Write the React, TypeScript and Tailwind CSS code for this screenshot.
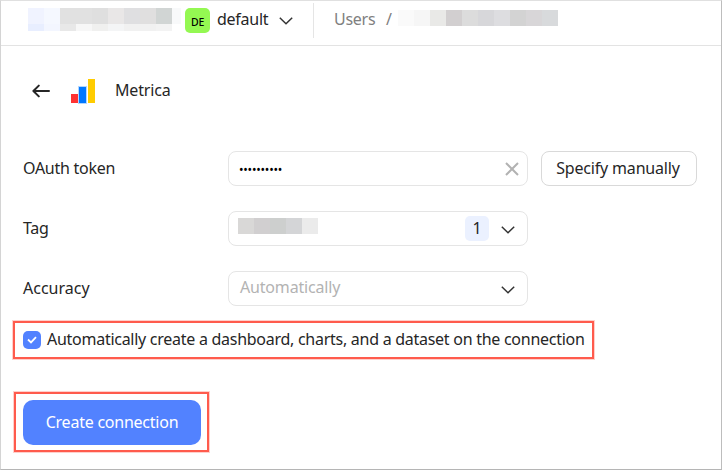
import type { ReactNode } from "react";

function Chevron() {
  return (
    <svg width="14" height="8" viewBox="0 0 14 8" fill="none" className="shrink-0">
      <path d="M0.8 0.8L7 6.8L13.2 0.8" stroke="#333" strokeWidth="1.5" />
    </svg>
  );
}

function Row({ label, children }: { label: ReactNode; children: ReactNode }) {
  return (
    <div className="flex h-[35px] items-center">
      <div className="mb-[2px] w-[205px] shrink-0">{label}</div>
      {children}
    </div>
  );
}

function Field({ children }: { children: ReactNode }) {
  return (
    <div className="flex h-[35px] w-[300px] items-center rounded-lg border border-[#e5e5e5]">
      {children}
    </div>
  );
}

export default function App() {
  return (
    <div className="h-[470px] w-[722px] overflow-hidden whitespace-nowrap border border-t-[#e0e0e0] border-r-[#bdbdbd] border-b-[#b5b5b5] border-l-[#d4d4d4] bg-white font-['Noto_Sans',sans-serif] text-base leading-6 tracking-[-0.27px] text-[#262626]">
      <header className="flex h-[45px] items-start border-b border-[#e3e3e3]">
        <div className="mt-[7px] ml-[27px] w-[153px] shrink-0">
          <div className="flex h-4">
            <i className="w-4 bg-[#f0f3ff]" />
            <i className="w-4 bg-[#f5f8ff]" />
            <i className="w-8 bg-[#e1e1e1]" />
            <i className="w-4 bg-[#dfdfdf]" />
            <i className="w-4 bg-[#e9e7e7]" />
            <i className="w-4 bg-[#dfdfe1]" />
            <i className="w-4 bg-[#e0dfdf]" />
            <i className="w-4 bg-[#d1d5d4]" />
            <i className="w-[9px] bg-[#f8f9fa]" />
          </div>
          <div className="flex h-[7px]">
            <i className="w-4 bg-[#e8eeff]" />
            <i className="w-4 bg-[#f3f6ff]" />
            <i className="w-4 bg-[#e8e8e8]" />
            <i className="w-4 bg-[#f7f7f7]" />
            <i className="w-4 bg-[#f0f0ef]" />
            <i className="w-4 bg-[#f4f5f6]" />
            <i className="w-8 bg-[#f1f1f1]" />
            <i className="w-4 bg-[#f3f3f3]" />
          </div>
        </div>
        <div className="mt-[7px] ml-[4px] flex h-[25px] w-[25px] items-center justify-center rounded-[5px] bg-[#94f852] pt-[2px] font-['Noto_Sans',sans-serif] text-[10.5px] font-medium tracking-[-0.2px] text-black">
          DE
        </div>
        <span className="mt-[6px] ml-[7px] w-[62px]">default</span>
        <div className="mt-4">
          <Chevron />
        </div>
        <div className="mt-[2px] ml-5 h-[35px] w-px bg-[#e5e5e5]" />
        <span className="mt-[6px] ml-5 w-[52px] text-[#808080]">Users</span>
        <span className="mt-[6px] w-[12px] text-[#808080]">/</span>
        <div className="mt-[9px] flex h-4">
          <i className="w-4 bg-[#fafafa]" />
          <i className="w-4 bg-[#f6f6f6]" />
          <i className="w-4 bg-[#e9e9e7]" />
          <i className="w-4 bg-[#d2cfd0]" />
          <i className="w-4 bg-[#dcdcdc]" />
          <i className="w-4 bg-[#d7d7da]" />
          <i className="w-4 bg-[#dddde0]" />
          <i className="w-4 bg-[#d3d3d3]" />
          <i className="w-4 bg-[#d8d6d8]" />
          <i className="w-4 bg-[#d8dadc]" />
        </div>
      </header>

      <main className="pl-[22px]">
        <div className="flex h-[105px] items-start pt-[32px]">
          <svg width="18" height="14" viewBox="0 0 18 14" fill="none" className="mt-[6px] ml-[9px]">
            <path
              d="M17 7H1.5M6.8 1.6L1.4 7L6.8 12.4"
              stroke="#262626"
              strokeWidth="2"
              strokeLinecap="round"
              strokeLinejoin="round"
            />
          </svg>
          <div className="ml-[21px] flex h-[25px] items-end gap-px">
            <i className="h-[9px] w-[7px] bg-[#ff3333]" />
            <i className="h-[16px] w-[7px] bg-[#0077ff] ring-1 ring-[#0077ff]/30" />
            <i className="ml-px h-[24px] w-[7px] bg-[#ffcc00]" />
          </div>
          <span className="ml-5 tracking-[-0.15px]">Metrica</span>
        </div>

        <div className="flex flex-col gap-[25px]">
          <Row label="OAuth token">
            <Field>
              <span className="mt-[2px] ml-[10px] text-[12px] tracking-[-0.2px] text-black">••••••••••</span>
              <svg width="14" height="14" viewBox="0 0 14 14" fill="none" className="mr-[8px] ml-auto">
                <path d="M1 1L13 13M13 1L1 13" stroke="#b2b2b2" strokeWidth="2" />
              </svg>
            </Field>
            <button className="ml-[13px] h-[35px] w-[156px] rounded-lg border border-[#d9d9d9] pr-[2px] pb-[2px] pl-0 tracking-[-0.18px]">
              <span>Specify manually</span>
            </button>
          </Row>
          <Row label="Tag">
            <Field>
              <div className="mb-[6px] ml-[9px] flex h-4">
                <i className="w-4 bg-[#d9d8d7]" />
                <i className="w-4 bg-[#d1cfd0]" />
                <i className="w-4 bg-[#cdcfce]" />
                <i className="w-4 bg-[#d4d5d7]" />
                <i className="w-4 bg-[#ebebeb]" />
              </div>
              <div className="mr-[12px] ml-auto flex h-[25px] w-6 items-center justify-center rounded-[5px] bg-[#ebf1ff] pb-[2px]">
                1
              </div>
              <div className="mt-[2px] mr-[12px]">
                <Chevron />
              </div>
            </Field>
          </Row>
          <Row label={<span className="tracking-normal">Accuracy</span>}>
            <Field>
              <span className="mb-[3px] ml-[11px] tracking-[-0.18px] text-[#b3b3b3]">Automatically</span>
              <div className="mt-[2px] mr-[12px] ml-auto">
                <Chevron />
              </div>
            </Field>
          </Row>
        </div>

        <div className="mt-[15px] -ml-[10px] flex h-[38px] w-[581px] items-center border-2 border-[#ff5b4d] pl-[8px] ring-1 ring-[#ffd0cc]">
          <div className="flex h-[18px] w-[18px] shrink-0 items-center justify-center rounded-[5px] bg-[#5282ff]">
            <svg width="10" height="8" viewBox="0 0 10 8" fill="none">
              <path d="M1 3.5L4 6.4L9 1.2" stroke="white" strokeWidth="1.8" />
            </svg>
          </div>
          <span className="mb-[2px] ml-[6px]">
            Automatically create a dashboard, charts, and a dataset on the connection
          </span>
        </div>

        <div className="mt-[33px] -ml-[9px] h-[60px] w-[195px] border-2 border-[#ff5b4d] pt-[6px] pl-[7px] ring-1 ring-[#ffd0cc]">
          <button className="h-[45px] w-[178px] rounded-[10px] bg-[#5282ff] pb-[2px] tracking-[-0.24px] text-white">
            <span>Create connection</span>
          </button>
        </div>
      </main>
    </div>
  );
}
